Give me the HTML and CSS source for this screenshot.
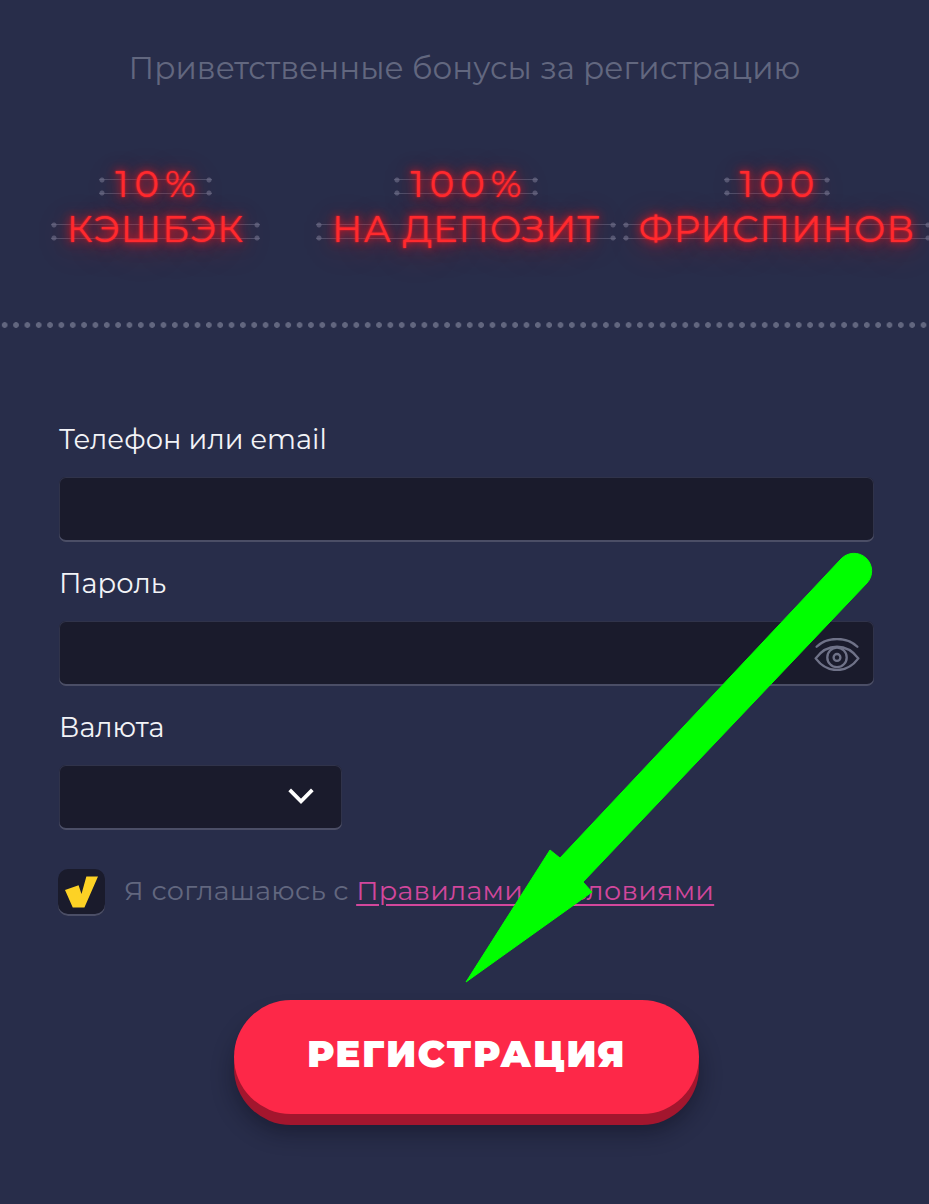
FILE: index.html
```html
<!DOCTYPE html>
<html lang="ru">
<head>
<meta charset="utf-8">
<title>Регистрация</title>
<link rel="stylesheet" href="styles.css">
</head>
<body>
<main class="page">
  <section class="bonuses">
    <h1 class="title">Приветственные бонусы за регистрацию</h1>
    <div class="neon-row">
      <div class="neon"><span class="neon-line neon-num">10%</span><span class="neon-line">КЭШБЭК</span></div>
      <div class="neon"><span class="neon-line neon-num">100%</span><span class="neon-line">НА ДЕПОЗИТ</span></div>
      <div class="neon neon-c"><span class="neon-line neon-num">100</span><span class="neon-line">ФРИСПИНОВ</span></div>
    </div>
  </section>
  <div class="dots"></div>
  <form class="form">
    <label class="label">Телефон или email</label>
    <div class="field"></div>
    <label class="label">Пароль</label>
    <div class="field">
      <svg class="eye" viewBox="0 0 46 34" fill="none" stroke="#6f7288" stroke-width="2.4" stroke-linecap="round" stroke-linejoin="round">
        <path d="M2 9C8 3 15 1 23 1s15 2 21 8"/>
        <path d="M1 21C7 13 14 9 23 9s16 4 22 12c-6 8-13 12-22 12S7 29 1 21z"/>
        <circle cx="23" cy="20" r="10"/>
        <circle cx="23" cy="20" r="3.500"/>
      </svg>
    </div>
    <label class="label">Валюта</label>
    <div class="field field-select">
      <svg class="chevron" viewBox="0 0 28 18" fill="none" stroke="#fff" stroke-width="4"><path d="M2 2l12 12L26 2"/></svg>
    </div>
    <div class="agree">
      <span class="checkbox">
        <svg class="tick" viewBox="0 0 34 32"><path d="M0 14l14-5 3 9L22 0h12L20 32H8z" fill="#fdd225"/></svg>
      </span>
      <span class="agree-text">Я соглашаюсь с <a class="agree-link" href="#">Правилами и условиями</a></span>
    </div>
    <div class="actions"><button class="submit" type="button">РЕГИСТРАЦИЯ</button></div>
  </form>
  <svg class="arrow" viewBox="0 0 929 1204">
    <path d="M841 559a17.500 17.500 0 0 1 26 24L583 882l9 10-126 90 84-132 10 8z" fill="#00ff00" stroke="#00ff00" stroke-width="1" stroke-linejoin="round"/>
  </svg>
</main>
</body>
</html>
```

FILE: styles.css
```css
* { box-sizing: border-box; }
html, body { margin: 0; padding: 0; }
body {
  background: #282d4a;
  font-family: "Montserrat", "Lato", "Noto Sans", sans-serif;
}
.page {
  position: relative;
  width: 929px;
  height: 1204px;
  overflow: hidden;
  background: #282d4a;
}
.bonuses { height: 320px; padding-top: 48px; }
.title {
  margin: 0;
  text-align: center;
  font-size: 31px;
  line-height: 40px;
  font-weight: 400;
  color: #62677f;
  letter-spacing: 0.05px;
}
.neon-row {
  display: grid;
  grid-template-columns: 311px 310px 308px;
  margin-top: 73px;
}
.neon {
  position: relative;
  z-index: 0;
  display: flex;
  flex-direction: column;
  align-items: center;
  text-align: center;
  font-size: 37px;
  line-height: 45px;
  font-weight: 400;
  color: #ff2a2e;
  text-shadow: 0 0 2px #ff1e24, 0 0 8px rgba(255, 20, 28, .9), 0 2px 16px rgba(255, 20, 28, .6), 0 6px 34px rgba(255, 20, 28, .45);
  letter-spacing: 1px;
}
.neon-c { padding-left: 4px; }
.neon-line {
  position: relative;
  display: block;
  white-space: nowrap;
  padding: 0 16px;
}
.neon-num {
  letter-spacing: 6px;
  padding: 0 10px 0 16px;
}
.neon-line::before, .neon-line::after {
  content: "";
  position: absolute;
  left: 0;
  right: 0;
  height: 6px;
  background:
    radial-gradient(circle at 3px center, rgba(108, 111, 138, .65) 0, rgba(108, 111, 138, .65) 2px, transparent 3px),
    radial-gradient(circle at calc(100% - 3px) center, rgba(108, 111, 138, .65) 0, rgba(108, 111, 138, .65) 2px, transparent 3px),
    linear-gradient(to bottom, transparent 2.500px, rgba(120, 124, 150, .45) 2.500px, rgba(120, 124, 150, .45) 3.500px, transparent 3.500px);
  z-index: -1;
}
.neon-line::before { top: 16px; }
.neon-line::after { top: 29px; }
.dots {
  height: 10px;
  background-image: radial-gradient(circle at center, #62667f 0, #62667f 2.500px, transparent 3.200px);
  background-size: 11.35px 10px;
  background-position: -1px 0;
}
.form { padding: 96px 55px 0 59px; }
.label {
  display: block;
  height: 28px;
  margin-bottom: 23px;
  font-size: 27.300px;
  line-height: 28px;
  color: #f2f3f7;
}
.field {
  position: relative;
  height: 65px;
  margin-bottom: 28px;
  background: #1a1b2c;
  border-radius: 7px;
  box-shadow: inset 0 -2px 0 #4b4e66, inset 0 0 0 1px #30334a;
}
.eye {
  position: absolute;
  right: 14px;
  top: 17px;
  width: 46px;
  height: 33px;
}
.field-select { width: 283px; margin-bottom: 39px; }
.chevron {
  position: absolute;
  right: 27px;
  top: 23px;
  width: 28px;
  height: 17px;
}
.agree {
  display: flex;
  align-items: center;
  gap: 19px;
  margin-left: -1px;
}
.checkbox {
  display: flex;
  align-items: center;
  justify-content: center;
  width: 47px;
  height: 47px;
  border-radius: 10px;
  background: #1a1b2c;
  box-shadow: inset 0 -2px 0 #4b4e66;
}
.tick { width: 33px; height: 32px; margin-top: -2px; }
.agree-text {
  font-size: 27px;
  line-height: 34px;
  color: #62677f;
  letter-spacing: 0.3px;
  margin-top: -3px;
}
.agree-link {
  color: #d2479c;
  text-decoration: underline;
  text-underline-offset: 4px;
}
.actions {
  display: flex;
  margin-top: 84px;
  margin-left: 175px;
}
.submit {
  width: 465px;
  height: 114px;
  border: 0;
  padding: 0 0 8px;
  border-radius: 57px;
  background: #fd2848;
  color: #fff;
  font-family: "Montserrat", "Lato", "Noto Sans", sans-serif;
  font-size: 37px;
  font-weight: 900;
  letter-spacing: 1.5px;
  box-shadow: 0 11px 0 #a3162e, 0 18px 22px rgba(10, 10, 25, .45);
}
.arrow {
  position: absolute;
  left: 0;
  top: 0;
  width: 929px;
  height: 1204px;
  pointer-events: none;
}
```
